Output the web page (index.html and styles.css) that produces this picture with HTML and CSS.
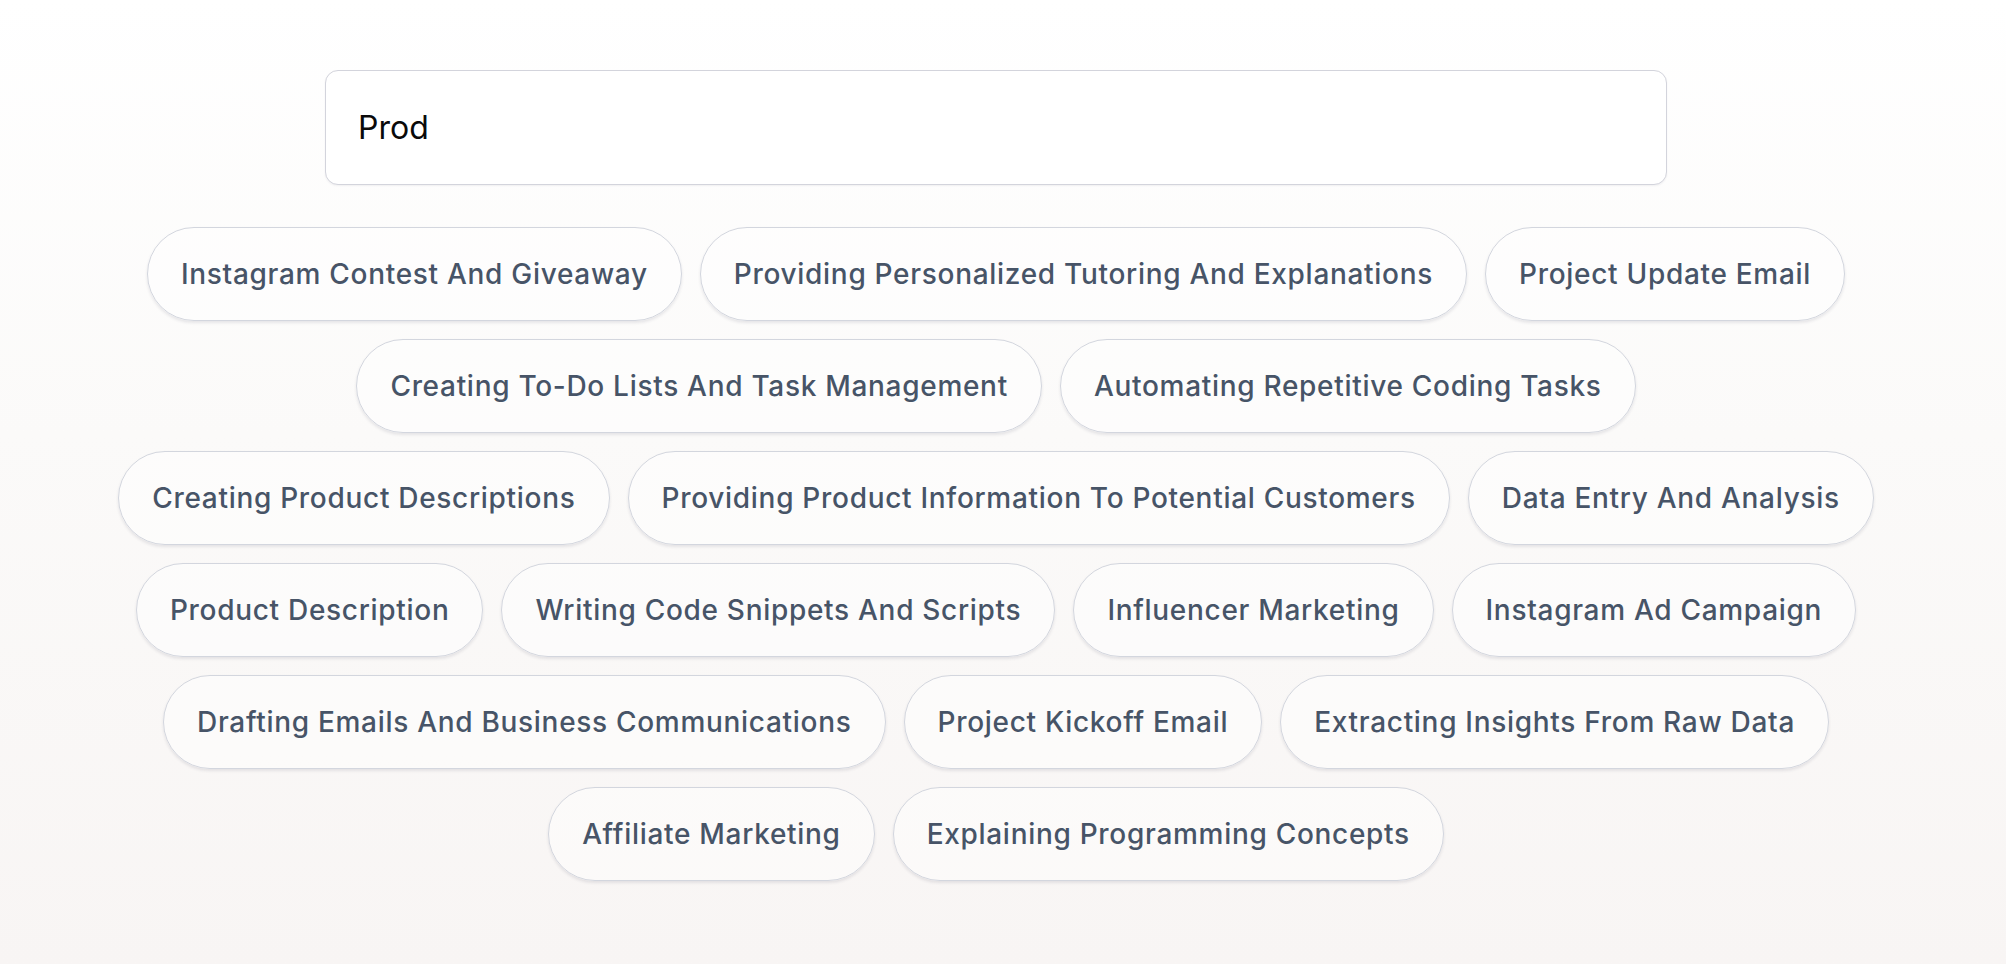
FILE: index.html
```html
<!DOCTYPE html>
<html lang="en">
<head>
<meta charset="utf-8">
<title>Prompt search</title>
<link rel="stylesheet" href="styles.css">
</head>
<body>
<main class="page">
  <div class="search">
    <input class="search-input" type="text" value="Prod">
  </div>
  <div class="chips">
    <div class="chip-row">
      <span class="chip">Instagram Contest And Giveaway</span>
      <span class="chip">Providing Personalized Tutoring And Explanations</span>
      <span class="chip">Project Update Email</span>
    </div>
    <div class="chip-row">
      <span class="chip">Creating To-Do Lists And Task Management</span>
      <span class="chip">Automating Repetitive Coding Tasks</span>
    </div>
    <div class="chip-row">
      <span class="chip">Creating Product Descriptions</span>
      <span class="chip">Providing Product Information To Potential Customers</span>
      <span class="chip">Data Entry And Analysis</span>
    </div>
    <div class="chip-row">
      <span class="chip">Product Description</span>
      <span class="chip">Writing Code Snippets And Scripts</span>
      <span class="chip">Influencer Marketing</span>
      <span class="chip">Instagram Ad Campaign</span>
    </div>
    <div class="chip-row">
      <span class="chip">Drafting Emails And Business Communications</span>
      <span class="chip">Project Kickoff Email</span>
      <span class="chip">Extracting Insights From Raw Data</span>
    </div>
    <div class="chip-row">
      <span class="chip">Affiliate Marketing</span>
      <span class="chip">Explaining Programming Concepts</span>
    </div>
  </div>
</main>
</body>
</html>
```

FILE: styles.css
```css
* {
  box-sizing: border-box;
}

html, body {
  margin: 0;
  padding: 0;
}

body {
  min-height: 100vh;
  background: linear-gradient(to bottom, #ffffff 0%, #fbfaf9 45%, #f8f5f4 100%);
  font-family: Inter, "Noto Sans", sans-serif;
}

.page {
  display: flex;
  flex-direction: column;
  align-items: center;
  padding: 70px 14px 0 0;
}

.search {
  width: 1342px;
}

.search-input {
  display: block;
  width: 100%;
  height: 115px;
  padding: 0 32px;
  border: 1px solid #d3d4dc;
  border-radius: 13px;
  background: #ffffff;
  box-shadow: 0 1px 2px rgba(30, 30, 60, 0.06);
  font-family: Inter, "Noto Sans", sans-serif;
  font-size: 32px;
  font-weight: 400;
  color: #0a0a0a;
  outline: none;
}

.chips {
  display: flex;
  flex-direction: column;
  align-items: center;
  gap: 18px;
  margin-top: 42px;
}

.chip-row {
  display: flex;
  justify-content: center;
  gap: 18px;
}

.chip {
  display: flex;
  align-items: center;
  height: 94px;
  padding: 0 33px;
  border: 1px solid #d3d6de;
  border-radius: 47px;
  background: rgba(255, 255, 255, 0.45);
  box-shadow: 0 2px 3px rgba(40, 40, 70, 0.10);
  font-size: 28px;
  font-weight: 500;
  letter-spacing: 0.7px;
  color: #475467;
  white-space: nowrap;
}
```
